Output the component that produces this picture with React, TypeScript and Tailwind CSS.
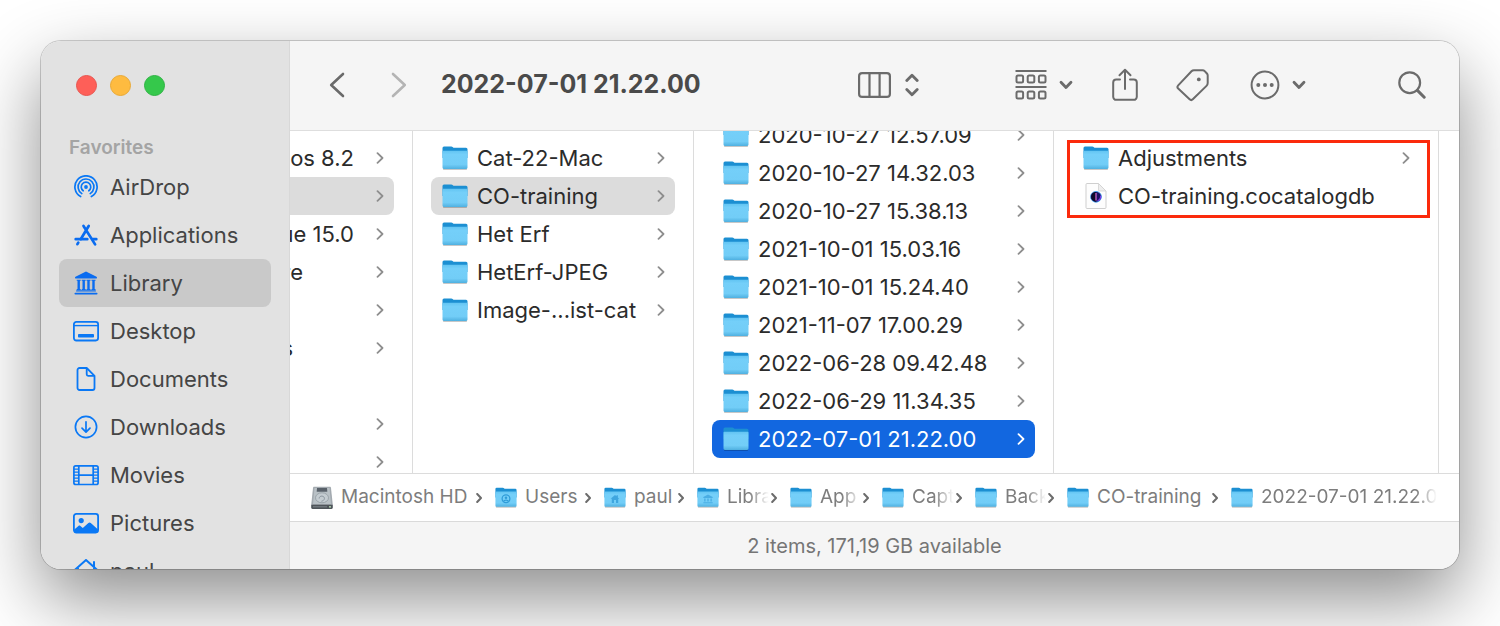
import React from "react";
import clsx from "clsx";

type IconProps = { className?: string };

/* ---------- sidebar icons ---------- */

const AirDropIcon = () => (
  <svg width="26" height="24" viewBox="-13 -12 26 24" fill="none" stroke="#0a78f5" strokeWidth="1.7" strokeLinecap="round">
    <path d="M-5.4 9.6A11.1 11.1 0 1 1 5.4 9.6" />
    <path d="M-4.2 6.6A7.9 7.9 0 1 1 4.2 6.6" />
    <path d="M-2.8 3.8A4.8 4.8 0 1 1 2.8 3.8" />
    <circle r="1.9" fill="#0a78f5" stroke="none" />
  </svg>
);

const AppsIcon = () => (
  <svg width="26" height="24" viewBox="-1.5 -1 26 24" fill="none" stroke="#0a6cf0" strokeWidth="2.7" strokeLinecap="round">
    <path d="M14.2 2 6.2 15.2M9 2l11.6 18.4M3.8 18.6l-.9 1.6" />
    <path d="M1.2 15.2h11.6M18.2 15.2h3.6" />
  </svg>
);

const LibraryIcon = () => (
  <svg width="26" height="24" viewBox="-1.5 -.5 26 24" fill="#0a6cf0">
    <path d="M11.5 0 22 5.2c.8.4.6 1.9-.4 1.9H1.4C.4 7.1.2 5.6 1 5.2z" />
    <path d="M2.2 8.2h4v1h-.8v8.2h.8v1h-4v-1H3V9.2h-.8zM7.2 8.2h4v1h-.8v8.2h.8v1h-4v-1H8V9.2h-.8zM12 8.2h4v1h-.8v8.2h.8v1h-4v-1h.8V9.2H12zM17 8.2h4v1h-.8v8.2h.8v1h-4v-1h.8V9.2H17z" />
    <rect x="1.6" y="18.8" width="19.8" height="1.3" rx=".4" />
    <rect x="0" y="21.2" width="23" height="1.8" rx=".8" />
  </svg>
);

const DesktopIcon = () => (
  <svg width="26" height="24" viewBox="0 -2 26 24" fill="none" stroke="#0a78f5" strokeWidth="1.8">
    <rect x=".9" y=".9" width="24.2" height="18.6" rx="2.4" />
    <path d="M1 4.6h24" strokeWidth="1.4" />
    <rect x="5" y="13" width="16" height="3.6" rx=".8" fill="#0a78f5" stroke="none" />
  </svg>
);

const DocumentIcon = () => (
  <svg width="26" height="24" viewBox="-3.5 0 26 24" fill="none" stroke="#0a78f5" strokeWidth="1.8" strokeLinejoin="round">
    <path d="M3 1h7.2L18 8.8V21a2 2 0 0 1-2 2H3a2 2 0 0 1-2-2V3a2 2 0 0 1 2-2z" />
    <path d="M10.2 1v6.3a1.5 1.5 0 0 0 1.5 1.5H18" />
  </svg>
);

const DownloadIcon = () => (
  <svg width="26" height="24" viewBox="-13 -12 26 24" fill="none" stroke="#0a78f5" strokeWidth="1.7" strokeLinecap="round" strokeLinejoin="round">
    <circle r="10.6" />
    <path d="M0-5.2V5M-4 1.2 0 5.2l4-4" />
  </svg>
);

const MoviesIcon = () => (
  <svg width="26" height="24" viewBox="0 -2 26 24" fill="none" stroke="#0a78f5" strokeWidth="1.7">
    <rect x=".9" y=".9" width="24.2" height="18.6" rx="1.8" />
    <path d="M5.8 1v18.5M20.2 1v18.5M6 10.2h14" />
    <path d="M1 4.2h4.8M1 7.2h4.8M1 10.2h4.8M1 13.2h4.8M1 16.2h4.8M20.2 4.2H25M20.2 7.2H25M20.2 10.2H25M20.2 13.2H25M20.2 16.2H25" strokeWidth="1.3" />
  </svg>
);

const PicturesIcon = () => (
  <svg width="26" height="24" viewBox="0 -2 26 24">
    <rect x=".9" y=".9" width="24.2" height="18.6" rx="2.4" fill="none" stroke="#0a78f5" strokeWidth="1.8" />
    <circle cx="8.2" cy="7.6" r="2.6" fill="#0a78f5" />
    <path d="M1 16.8 5.4 13c.7-.6 1.4-.6 2 0l2.4 2 5.6-5c.8-.7 1.6-.7 2.4 0L25 16.5v1.7a1.8 1.8 0 0 1-1.8 1.8H2.8A1.8 1.8 0 0 1 1 18.2z" fill="#0a78f5" />
  </svg>
);

const HomeIcon = () => (
  <svg width="26" height="24" viewBox="-13 0 26 24" fill="none" stroke="#0a78f5" strokeWidth="2" strokeLinecap="round" strokeLinejoin="round">
    <path d="M-11.5 11.2 0 1l11.5 10.2M8 7.8V3M-8 9.5V22H8V9.5" />
  </svg>
);

/* ---------- toolbar icons ---------- */

const NavChevron = ({ className }: IconProps) => (
  <svg width="16" height="26" viewBox="0 0 16 26" fill="none" stroke="currentColor" strokeWidth="2.6" strokeLinecap="round" strokeLinejoin="round" className={className}>
    <path d="M14 2 2.2 13 14 24" />
  </svg>
);

const ColumnsIcon = () => (
  <svg width="33" height="26" viewBox="0 0 33 26" fill="none" stroke="currentColor" strokeWidth="2.2">
    <rect x="1.1" y="1.1" width="30.8" height="23.8" rx="3" />
    <path d="M11.5 1v24M21.6 1v24" />
  </svg>
);

const UpDownIcon = () => (
  <svg width="14" height="24" viewBox="0 0 14 24" fill="none" stroke="currentColor" strokeWidth="2.8" strokeLinecap="round" strokeLinejoin="round">
    <path d="M1.8 7.5 7 2.2l5.2 5.3M1.8 16.5 7 21.8l5.2-5.3" />
  </svg>
);

const GroupIcon = () => (
  <svg width="32" height="32" viewBox="0 0 32 32" fill="none" stroke="currentColor" strokeWidth="2">
    <path d="M.5 2h31M.5 18h31" />
    <rect x="1.5" y="6.5" width="6.6" height="7" rx="1.5" />
    <rect x="12.7" y="6.5" width="6.6" height="7" rx="1.5" />
    <rect x="23.9" y="6.5" width="6.6" height="7" rx="1.5" />
    <rect x="1.5" y="22.5" width="6.6" height="7" rx="1.5" />
    <rect x="12.7" y="22.5" width="6.6" height="7" rx="1.5" />
    <rect x="23.9" y="22.5" width="6.6" height="7" rx="1.5" />
  </svg>
);

const DownChevron = () => (
  <svg width="14" height="10" viewBox="0 0 14 10" fill="none" stroke="currentColor" strokeWidth="2.8" strokeLinecap="round" strokeLinejoin="round">
    <path d="M2 2.2 7 7.5l5-5.3" />
  </svg>
);

const ShareIcon = () => (
  <svg width="26" height="34" viewBox="0 0 26 34" fill="none" stroke="currentColor" strokeWidth="2" strokeLinecap="round" strokeLinejoin="round">
    <path d="M8 11.5H4.2a3 3 0 0 0-3 3v14.3a3 3 0 0 0 3 3h17.6a3 3 0 0 0 3-3V14.5a3 3 0 0 0-3-3H18" />
    <path d="M13 21V2M7.5 7.2 13 1.8l5.5 5.4" />
  </svg>
);

const TagIcon = () => (
  <svg width="34" height="34" viewBox="0 0 34 34" fill="none" stroke="currentColor" strokeWidth="2" strokeLinejoin="round">
    <path d="M18 2.2h8.6a3 3 0 0 1 2.1.9l2.2 2.4a3 3 0 0 1 .8 2v7.6a4 4 0 0 1-1.2 2.8L16.8 31.3a2.3 2.3 0 0 1-3.2 0L2.2 20.6a2.3 2.3 0 0 1 0-3.200L15.500 3.300a3.500 3.500 0 0 1 2.500-1.100z" />
    <circle cx="22.8" cy="11.4" r="1.9" fill="currentColor" stroke="none" />
  </svg>
);

const MoreIcon = () => (
  <svg width="30" height="30" viewBox="-15 -15 30 30" fill="currentColor">
    <circle r="13.4" fill="none" stroke="currentColor" strokeWidth="2" />
    <circle cx="-6.7" r="2" />
    <circle r="2" />
    <circle cx="6.7" r="2" />
  </svg>
);

const SearchIcon = () => (
  <svg width="28" height="28" viewBox="0 0 28 28" fill="none" stroke="currentColor" strokeLinecap="round">
    <circle cx="11.7" cy="11.7" r="10.4" strokeWidth="2.2" />
    <path d="m19.4 19.4 6.8 6.8" strokeWidth="3" />
  </svg>
);

/* ---------- file icons ---------- */

const FolderIcon = ({ className, children }: IconProps & { children?: React.ReactNode }) => (
  <svg viewBox="0 0 26 24" className={clsx("shrink-0", className)}>
    <defs>
      <linearGradient id="folder" x1="0" y1="0" x2="0" y2="1">
        <stop offset="0" stopColor="#62c4f2" />
        <stop offset=".2" stopColor="#74cff9" />
        <stop offset=".75" stopColor="#72cdf7" />
        <stop offset="1" stopColor="#4fb0e0" />
      </linearGradient>
    </defs>
    <path d="M1 22h24v1.300a.7.700 0 0 1-.7.700H1.700a.7.700 0 0 1-.7-.7z" fill="#000" opacity=".22" />
    <path d="M.5 2A1.500 1.500 0 0 1 2 .5h7.200c.8 0 1.200.3 1.700.8l.6.500H24a1.500 1.500 0 0 1 1.500 1.500V12H.5z" fill="#1c8fd2" />
    <path d="M.5 5.800c0-.7.400-1 1-1h23c.6 0 1 .3 1 1v15.800a1.400 1.400 0 0 1-1.400 1.400H1.900a1.400 1.400 0 0 1-1.400-1.400z" fill="url(#folder)" />
    {children}
  </svg>
);

const UserGlyph = () => (
  <g fill="none" stroke="#2f9cd8" strokeWidth="1.5">
    <circle cx="13" cy="13.5" r="4.6" />
    <circle cx="13" cy="12.2" r="1.5" fill="#2f9cd8" stroke="none" />
    <path d="M10 16.5c1.2-2 4.800-2 6 0" />
  </g>
);

const HomeGlyph = () => (
  <path d="M7.800 13.500 13 9l1.800 1.600V9.400h1.600v2.500l1.800 1.600h-1.400v5h-2.600V15h-2.400v3.500H9.200v-5z" fill="#3fa6df" />
);

const LibraryGlyph = () => (
  <path d="M13 8.500 18.500 11.500v1h-11v-1zM8.500 13.300h1.600v3.400H8.500zM12.200 13.300h1.600v3.400h-1.600zM15.900 13.300h1.600v3.400h-1.600zM7.500 17.500h11v1.300h-11z" fill="#4aaee4" />
);

const DiskIcon = () => (
  <svg width="22" height="24" viewBox="0 0 22 24" className="shrink-0">
    <path d="M3.300.8h15.400c.8 0 1.200.4 1.300 1.200L21.700 18v3.600c0 .9-.5 1.400-1.400 1.400H1.700c-.9 0-1.400-.5-1.400-1.400V18L2 2C2.100 1.200 2.500.8 3.300.8z" fill="#a3aab0" />
    <path d="M3.500 2h15l1.500 16H2z" fill="#b9c1c6" />
    <path d="M6 2h10l.3 3.800H5.700z" fill="#59616a" />
    <ellipse cx="11" cy="11.800" rx="6.500" ry="5" fill="#c4ccd1" stroke="#909aa1" strokeWidth=".8" />
    <path d="M8.200 12.500c0-3.500 5.600-3 5.200.2-.2 1.500-1.700 2.300-3 2.600" fill="none" stroke="#86919a" strokeWidth=".9" />
    <path d="M.3 18.800h21.400v2.800c0 .9-.5 1.400-1.400 1.400H1.700c-.9 0-1.400-.5-1.400-1.400z" fill="#4f555a" />
    <path d="M2 20.800h14" stroke="#7e858a" />
    <circle cx="19" cy="20.800" r=".9" fill="#c9f0c5" />
  </svg>
);

const CatalogIcon = () => (
  <svg width="26" height="28" viewBox="0 0 26 28" className="shrink-0">
    <path d="M4 1.500h11.500L23 9v16.500a1 1 0 0 1-1 1H4a1 1 0 0 1-1-1v-23a1 1 0 0 1 1-1z" fill="#fdfdfd" stroke="#cfcfcf" />
    <path d="M15.500 1.500V8a1 1 0 0 0 1 1H23z" fill="#eee" stroke="#d2d2d2" strokeWidth=".8" />
    <circle cx="13" cy="14.800" r="5.400" fill="#1a1263" stroke="#37a0f5" strokeWidth=".8" />
    <path d="M13 9.900a4.900 4.900 0 0 0 0 9.800z" fill="#0d0b2b" />
    <path d="M13 11v7.500" stroke="#d96bd0" strokeWidth="1.200" />
    <path d="M14.500 18.800c2.500-1 3.300-3 3.200-5" stroke="#7d38e8" strokeWidth="1.200" fill="none" />
  </svg>
);

const RowChevron = () => (
  <svg width="8" height="12" viewBox="0 0 8 12" fill="none" stroke="currentColor" strokeWidth="1.8" strokeLinecap="round" strokeLinejoin="round" className="shrink-0">
    <path d="m1.500 1.200 5 4.800-5 4.800" />
  </svg>
);

const PathChevron = () => (
  <svg width="6" height="10" viewBox="0 0 6 10" fill="none" stroke="#6c6c6c" strokeWidth="2" strokeLinecap="round" strokeLinejoin="round" className="mr-[13px] shrink-0">
    <path d="m1.200 1 3.800 4-3.800 4" />
  </svg>
);

/* ---------- data ---------- */

const favorites = [
  { name: "AirDrop", icon: <AirDropIcon /> },
  { name: "Applications", icon: <AppsIcon /> },
  { name: "Library", icon: <LibraryIcon />, active: true },
  { name: "Desktop", icon: <DesktopIcon /> },
  { name: "Documents", icon: <DocumentIcon /> },
  { name: "Downloads", icon: <DownloadIcon /> },
  { name: "Movies", icon: <MoviesIcon /> },
  { name: "Pictures", icon: <PicturesIcon /> },
  { name: "paul", icon: <HomeIcon /> },
];

// first column is scrolled almost out of view, only name endings are left
const scrolled = [
  { name: "os 8.2", pad: "pr-[22px]" },
  { name: "", pad: "", selected: true },
  { name: "ue 15.0", pad: "pr-[22px]" },
  { name: "re", pad: "pr-[73px]" },
  { name: "", pad: "" },
  { name: "s", pad: "pr-[83px]" },
  null,
  { name: "", pad: "" },
  { name: "", pad: "" },
];

const catalogs = ["Cat-22-Mac", "CO-training", "Het Erf", "HetErf-JPEG", "Image-...ist-cat"];

const backups = [
  "2020-10-27 12.57.09",
  "2020-10-27 14.32.03",
  "2020-10-27 15.38.13",
  "2021-10-01 15.03.16",
  "2021-10-01 15.24.40",
  "2021-11-07 17.00.29",
  "2022-06-28 09.42.48",
  "2022-06-29 11.34.35",
  "2022-07-01 21.22.00",
];

const path = [
  { name: "Users", width: "w-[60px]", glyph: <UserGlyph /> },
  { name: "paul", width: "w-11", glyph: <HomeGlyph /> },
  { name: "Libra", width: "w-11", fade: true, glyph: <LibraryGlyph /> },
  { name: "App", width: "w-[43px]", fade: true },
  { name: "Capt", width: "w-11", fade: true },
  { name: "Back", width: "w-[43px]", fade: true },
  { name: "CO-training", width: "w-[115px]" },
];

/* ---------- pieces ---------- */

type RowProps = {
  name: string;
  icon?: React.ReactNode;
  selected?: "gray" | "blue";
  leaf?: boolean;
};

function FileRow({ name, icon, selected, leaf }: RowProps) {
  return (
    <li className="shrink-0">
      <button
        className={clsx(
          "flex h-[38px] w-full items-center gap-[9px] rounded-lg pr-2.5 pl-[11px] text-left",
          selected === "gray" && "bg-[#dcdcdc]",
          selected === "blue" && "bg-[#1267e0] text-white"
        )}
      >
        {icon ?? <FolderIcon className="h-6 w-[26px]" />}
        <span className="flex-1 whitespace-nowrap">{name}</span>
        {!leaf && (
          <span className={selected === "blue" ? "text-white" : "text-[#8e8e8e]"}>
            <RowChevron />
          </span>
        )}
      </button>
    </li>
  );
}

function Sidebar() {
  return (
    <aside className="w-[249px] shrink-0 overflow-hidden border-r border-[#d8d8d8] bg-[#e2e2e2] [contain:size]">
      <div className="flex h-[89px] items-center gap-[13px] pl-[35px]">
        <button aria-label="Close" className="size-[21px] rounded-full border border-[#e8554f] bg-[#fe5f58]" />
        <button aria-label="Minimize" className="size-[21px] rounded-full border border-[#e9a935] bg-[#febb40]" />
        <button aria-label="Zoom" className="size-[21px] rounded-full border border-[#2fb344] bg-[#35c84b]" />
      </div>
      <h2 className="flex h-[33px] items-center pt-1 pl-7 text-[19px] font-semibold text-[#a4a4a4]">Favorites</h2>
      <nav className="px-[18px]">
        {favorites.map((f) => (
          <a
            key={f.name}
            href="#"
            className={clsx(
              "flex h-12 items-center gap-[11px] rounded-lg pl-3.5 text-[22px] text-[#454545]",
              f.active && "bg-[#c9c9c9]"
            )}
          >
            {f.icon}
            {f.name}
          </a>
        ))}
      </nav>
    </aside>
  );
}

function Toolbar() {
  return (
    <header className="flex h-[90px] items-center border-b border-[#dedede] bg-[#f5f5f5] pr-[33px] pb-0.5 pl-[39px] text-[#6b6b6b]">
      <button aria-label="Back" className="text-[#6a6a6a]">
        <NavChevron />
      </button>
      <button aria-label="Forward" className="ml-[46px] text-[#b4b4b4]">
        <NavChevron className="rotate-180" />
      </button>
      <h1 className="ml-[34px] flex-1 text-[25px] font-bold whitespace-nowrap text-[#4a4a4a]">2022-07-01 21.22.00</h1>
      <button aria-label="View as columns" className="flex items-center gap-3.5">
        <ColumnsIcon />
        <UpDownIcon />
      </button>
      <button aria-label="Group items" className="ml-24 flex items-center gap-3">
        <GroupIcon />
        <DownChevron />
      </button>
      <button aria-label="Share" className="ml-[39px]">
        <ShareIcon />
      </button>
      <button aria-label="Edit tags" className="ml-[38px]">
        <TagIcon />
      </button>
      <button aria-label="More actions" className="ml-10 flex items-center gap-3">
        <MoreIcon />
        <DownChevron />
      </button>
      <button aria-label="Search" className="ml-[92px]">
        <SearchIcon />
      </button>
    </header>
  );
}

function Columns() {
  return (
    <div className="flex h-[342px] overflow-hidden bg-white text-[22px] text-[#2b2b2b]">
      <ul className="w-[123px] shrink-0 overflow-hidden border-r border-[#dcdcdc] pt-2 pr-[18px]">
        {scrolled.map((item, i) =>
          item ? (
            <li key={i}>
              <button
                className={clsx(
                  "flex h-[38px] w-full items-center justify-end rounded-r-lg pr-2.5",
                  item.selected && "bg-[#dcdcdc]"
                )}
              >
                <span className={clsx("whitespace-nowrap", item.pad)}>{item.name}</span>
                <span className="text-[#8e8e8e]">
                  <RowChevron />
                </span>
              </button>
            </li>
          ) : (
            <li key={i} className="h-[38px]" />
          )
        )}
      </ul>

      <ul className="w-[281px] shrink-0 border-r border-[#dcdcdc] px-[18px] pt-2">
        {catalogs.map((name) => (
          <FileRow key={name} name={name} selected={name === "CO-training" ? "gray" : undefined} />
        ))}
      </ul>

      <ul className="flex w-[360px] shrink-0 flex-col justify-end border-r border-[#dcdcdc] px-[18px] pb-[15px]">
        {backups.map((name) => (
          <FileRow key={name} name={name} selected={name === "2022-07-01 21.22.00" ? "blue" : undefined} />
        ))}
      </ul>

      <div className="mr-5 flex-1 border-r border-[#dcdcdc] px-[18px] pt-2">
        <ul className="relative">
          <FileRow name="Adjustments" />
          <FileRow name="CO-training.cocatalogdb" icon={<CatalogIcon />} leaf />
          {/* callout frame */}
          <li aria-hidden className="pointer-events-none absolute top-px -right-[10px] -bottom-[3px] -left-[5px] border-3 border-[#fb2a0c]" />
        </ul>
      </div>
    </div>
  );
}

function PathBar() {
  return (
    <div className="flex h-12 items-center border-t border-[#dcdcdc] bg-white pr-[22px] pl-[21px] text-[19px] whitespace-nowrap text-[#7d7d7d]">
      <DiskIcon />
      <span className="ml-2 w-[135px] shrink-0">Macintosh HD</span>
      <PathChevron />
      {path.map((p) => (
        <React.Fragment key={p.name}>
          <FolderIcon className="h-[21px] w-[22px]">{p.glyph}</FolderIcon>
          <span
            className={clsx(
              "ml-2 shrink-0 overflow-hidden",
              p.width,
              p.fade && "[mask-image:linear-gradient(to_right,black_50%,transparent_95%)]"
            )}
          >
            {p.name}
          </span>
          <PathChevron />
        </React.Fragment>
      ))}
      <FolderIcon className="h-[21px] w-[22px]" />
      <span className="ml-2 min-w-0 flex-1 overflow-hidden [mask-image:linear-gradient(to_right,black_88%,transparent)]">
        2022-07-01 21.22.00
      </span>
    </div>
  );
}

export default function App() {
  return (
    <div className="min-h-screen overflow-hidden bg-white px-[41px] pt-[41px] pb-[57px] font-['Inter','Liberation_Sans',sans-serif]">
      <div className="flex overflow-hidden rounded-[20px] shadow-[0_0_0_1px_rgba(0,0,0,0.18),0_30px_72px_rgba(0,0,0,0.45)]">
        <Sidebar />
        <main className="min-w-0 flex-1">
          <Toolbar />
          <Columns />
          <PathBar />
          <footer className="flex h-12 items-center justify-center border-t border-[#dadada] bg-[#f5f5f5] text-[20px] text-[#757575]">
            2 items, 171,19 GB available
          </footer>
        </main>
      </div>
    </div>
  );
}
